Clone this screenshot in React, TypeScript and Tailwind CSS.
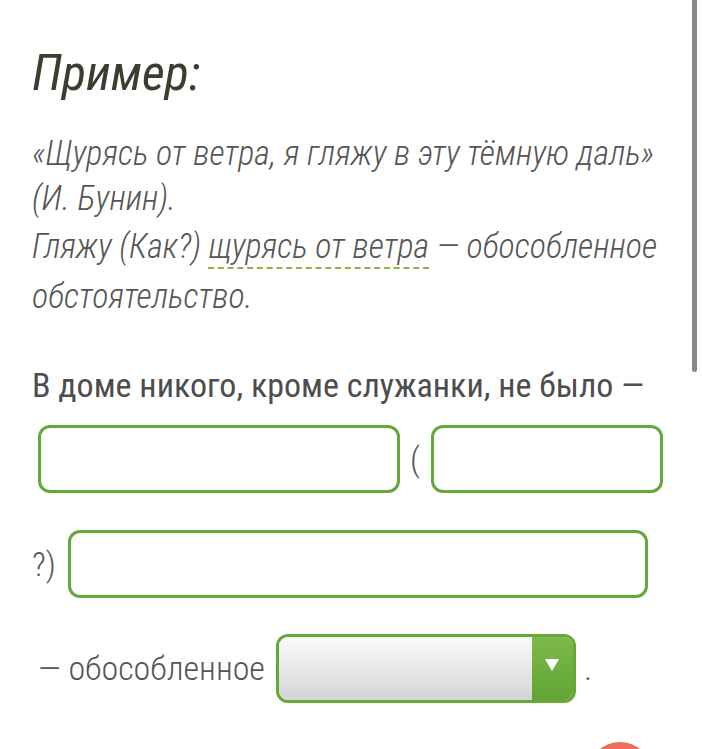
const font = { fontFamily: '"Roboto Condensed", Roboto, "Liberation Sans Narrow", sans-serif' };

function Field({ className }: { className: string }) {
    return <div className={`h-[68px] rounded-[12px] border-[3px] border-[#66a838] bg-white ${className}`} />;
}

export default function App() {
    return (
        <div className="relative h-[749px] w-[702px] overflow-hidden bg-white text-[#555]" style={font}>
            <div className="pl-8 pr-6 pt-[43px]">
                <h2 className="text-[50px] italic leading-[60px] text-[#3b3d2f]">Пример:</h2>

                <div className="mt-[28px] text-[34px] italic font-light leading-[45px]">
                    <p>
                        «Щурясь от ветра, я гляжу в эту тёмную даль»
                        <br />
                        (И. Бунин).
                    </p>
                    <p className="leading-[50px]">
                        Гляжу (Как?){' '}
                        <span className="underline decoration-[#8db340] decoration-dashed decoration-2 underline-offset-[9px]">
                            щурясь от ветра
                        </span>{' '}
                        — обособленное обстоятельство.
                    </p>
                </div>

                <p className="mt-[42px] text-[34px] leading-[44px] text-[#4d4d4d]">В доме никого, кроме служанки, не было —</p>

                <div className="mt-[18px] flex items-center pl-[6px] text-[34px] font-light">
                    <Field className="w-[362px]" />
                    <span className="ml-[10px] mr-[11px]">(</span>
                    <Field className="w-[232px]" />
                </div>

                <div className="mt-[37px] flex items-center text-[34px] font-light">
                    <span className="mr-[12px]">?)</span>
                    <Field className="w-[580px]" />
                </div>

                <div className="mt-[36px] flex items-center pl-[6px] text-[34px] font-light">
                    <span className="mr-[11px]">— обособленное</span>
                    <div className="flex h-[69px] w-[300px] overflow-hidden rounded-[12px] border-[3px] border-[#66a838]">
                        <div className="flex-1 bg-gradient-to-b from-[#fbfbfb] to-[#d4d4d4]" />
                        <div className="flex w-[41px] items-start justify-center bg-gradient-to-b from-[#7cb94c] to-[#62a433] pt-[22px]">
                            <span className="block h-0 w-0 border-x-[7px] border-t-[12px] border-x-transparent border-t-white" />
                        </div>
                    </div>
                    <span className="ml-[8px]">.</span>
                </div>
            </div>

            {/* scrollbar */}
            <div className="absolute right-[5px] top-0 h-[372px] w-[5px] rounded-b bg-[#888]" />
            {/* floating button */}
            <div className="absolute left-[588px] top-[742px] h-[64px] w-[64px] rounded-full bg-[#ec6f5a]" />
        </div>
    );
}
